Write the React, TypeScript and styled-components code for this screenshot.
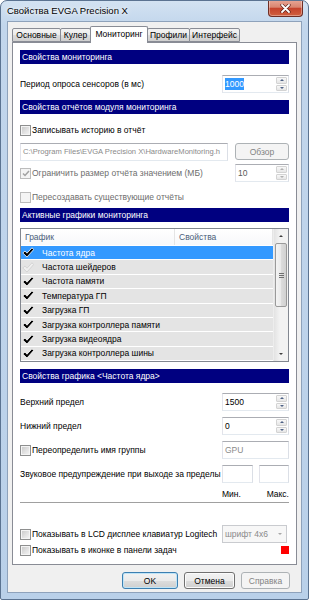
import styled, { createGlobalStyle } from "styled-components";

const GlobalStyle = createGlobalStyle`
  html, body {
    margin: 0;
    padding: 0;
  }
  body {
    font-family: "Liberation Sans", Arial, sans-serif;
    font-size: 8.5px;
    color: #000;
  }
`;

const Window = styled.div`
  width: 309px;
  height: 600px;
  box-sizing: border-box;
  border: 1px solid #5b7391;
  border-radius: 7px 7px 2px 2px;
  background: linear-gradient(180deg, #d3e2f2 0%, #c2d6ec 24px, #b9d0e9 100%);
  display: flex;
  flex-direction: column;
  overflow: hidden;
`;

const TitleBar = styled.div`
  height: 20px;
  display: flex;
  justify-content: space-between;
  align-items: flex-start;
  padding-left: 6px;
`;

const Title = styled.div`
  font-size: 9.5px;
  line-height: 20px;
  color: #000;
  text-shadow: 0 0 6px #fff, 0 0 3px #fff;
`;

const CloseButton = styled.div`
  width: 35px;
  height: 17px;
  margin-right: 5px;
  margin-top: -1px;
  box-sizing: border-box;
  border: 1px solid #6f2e25;
  border-top: none;
  border-radius: 0 0 4px 4px;
  background: linear-gradient(180deg, #e8a797 0%, #d98570 45%, #c5432c 52%, #d0603f 100%);
  box-shadow: inset 0 0 0 1px rgba(255, 255, 255, 0.35);
  display: flex;
  align-items: center;
  justify-content: center;
`;

const Client = styled.div`
  flex: 1;
  margin: 0 6px 6px;
  border: 1px solid #8ea2bb;
  background: #f0f0f0;
  display: flex;
  flex-direction: column;
`;

const TabStrip = styled.div`
  height: 16px;
  margin-top: 4px;
  padding-left: 4px;
  display: flex;
  align-items: flex-end;
`;

const Tab = styled.div<{ $w: number; $active?: boolean }>`
  width: ${(p) => p.$w}px;
  height: ${(p) => (p.$active ? 17 : 14)}px;
  margin-bottom: ${(p) => (p.$active ? -1 : 0)}px;
  margin-right: -1px;
  box-sizing: border-box;
  border: 1px solid #898c95;
  border-bottom: ${(p) => (p.$active ? "none" : "1px solid #898c95")};
  border-radius: 2px 2px 0 0;
  background: ${(p) =>
    p.$active
      ? "#fff"
      : "linear-gradient(180deg, #f3f3f3 0%, #ebebeb 50%, #dddddd 51%, #cfcfcf 100%)"};
  position: relative;
  z-index: ${(p) => (p.$active ? 2 : 1)};
  display: flex;
  align-items: center;
  justify-content: center;
  padding-bottom: ${(p) => (p.$active ? 3 : 0)}px;
  white-space: nowrap;
`;

const Panel = styled.div`
  height: 523px;
  margin: 0 4px;
  box-sizing: border-box;
  border: 1px solid #898c95;
  background: #fff;
  padding: 0 7px;
  display: flex;
  flex-direction: column;
`;

const SectionHeader = styled.div<{ $mt: number }>`
  height: 14px;
  margin-top: ${(p) => p.$mt}px;
  background: #000080;
  color: #fff;
  padding-left: 2px;
  display: flex;
  align-items: center;
  flex: none;
`;

const Row = styled.div<{ $mt: number; $h?: number; $end?: boolean }>`
  height: ${(p) => p.$h ?? 18}px;
  margin-top: ${(p) => p.$mt}px;
  display: flex;
  align-items: center;
  justify-content: ${(p) => (p.$end ? "flex-end" : "space-between")};
  flex: none;
`;

const Label = styled.span<{ $disabled?: boolean }>`
  color: ${(p) => (p.$disabled ? "#6d6d6d" : "#000")};
  white-space: nowrap;
`;

const CheckWrap = styled.label`
  display: flex;
  align-items: center;
  gap: 1px;
`;

const Box = styled.span<{ $disabled?: boolean }>`
  width: 11px;
  height: 11px;
  box-sizing: border-box;
  flex: none;
  border: 1px solid ${(p) => (p.$disabled ? "#bcbcbc" : "#8e8f8f")};
  background: ${(p) =>
    p.$disabled
      ? "#f4f4f4"
      : "linear-gradient(135deg, #c6c6c6 0%, #e2e2e2 55%, #f6f6f6 100%)"};
  box-shadow: inset 0 0 0 1px #f4f4f4;
  display: flex;
  align-items: center;
  justify-content: center;
`;

const TextBox = styled.div<{ $w: number; $disabled?: boolean; $small?: boolean }>`
  width: ${(p) => p.$w}px;
  height: 18px;
  box-sizing: border-box;
  border: 1px solid;
  border-color: #abadb3 #dbdfe6 #e3e9ef #e2e3ea;
  background: #fff;
  color: ${(p) => (p.$disabled ? "#8a8a8a" : "#000")};
  font-size: ${(p) => (p.$small ? "7.6px" : "inherit")};
  padding-left: 2px;
  display: flex;
  align-items: center;
  overflow: hidden;
  white-space: nowrap;
  flex: none;
`;

const SpinBox = styled.div<{ $w: number }>`
  width: ${(p) => p.$w}px;
  height: 18px;
  box-sizing: border-box;
  border: 1px solid;
  border-color: #abadb3 #dbdfe6 #e3e9ef #e2e3ea;
  background: #fff;
  display: flex;
  flex: none;
`;

const SpinValue = styled.div<{ $disabled?: boolean }>`
  flex: 1;
  padding-left: 2px;
  display: flex;
  align-items: center;
  color: ${(p) => (p.$disabled ? "#5a5a5a" : "#000")};
`;

const Selected = styled.span`
  background: #3399ff;
  color: #fff;
  padding: 1px 0;
`;

const SpinButtons = styled.div`
  width: 11px;
  display: flex;
  flex-direction: column;
  gap: 1px;
  padding: 1px 1px 1px 0;
`;

const SpinBtn = styled.div`
  flex: 1;
  box-sizing: border-box;
  border: 1px solid #d3d3d3;
  border-radius: 1px;
  background: linear-gradient(180deg, #f8f8f8, #e6e6e6);
  display: flex;
  align-items: center;
  justify-content: center;
`;

const Arrow = styled.span<{ $down?: boolean; $color?: string }>`
  width: 0;
  height: 0;
  border-left: 2.5px solid transparent;
  border-right: 2.5px solid transparent;
  ${(p) =>
    p.$down
      ? `border-top: 2.5px solid ${p.$color ?? "#4d6185"};`
      : `border-bottom: 2.5px solid ${p.$color ?? "#4d6185"};`}
`;

const Button = styled.div<{ $w: number; $disabled?: boolean; $default?: boolean }>`
  width: ${(p) => p.$w}px;
  height: 17px;
  box-sizing: border-box;
  border: 1px solid
    ${(p) => (p.$disabled ? "#adb2b5" : p.$default ? "#3c7fb1" : "#707070")};
  border-radius: 3px;
  background: ${(p) =>
    p.$disabled
      ? "#f4f4f4"
      : "linear-gradient(180deg, #f2f2f2 0%, #ebebeb 50%, #dddddd 51%, #cfcfcf 100%)"};
  box-shadow: ${(p) =>
    p.$disabled
      ? "none"
      : p.$default
      ? "inset 0 0 0 1px #bfe4f7"
      : "inset 0 0 0 1px #fbfbfb"};
  color: ${(p) => (p.$disabled ? "#838383" : "#000")};
  display: flex;
  align-items: center;
  justify-content: center;
  flex: none;
`;

const ListView = styled.div`
  height: 134px;
  margin-top: 6px;
  box-sizing: border-box;
  border: 1px solid #828790;
  display: flex;
  flex: none;
`;

const ListMain = styled.div`
  flex: 1;
  display: flex;
  flex-direction: column;
  overflow: hidden;
`;

const ListHeader = styled.div`
  height: 16px;
  flex: none;
  display: flex;
  align-items: center;
  background: linear-gradient(180deg, #ffffff, #f7f8fa);
`;

const HeaderCell = styled.div<{ $w?: number }>`
  width: ${(p) => (p.$w ? `${p.$w}px` : "auto")};
  flex: ${(p) => (p.$w ? "none" : 1)};
  height: 100%;
  box-sizing: border-box;
  padding-left: 4px;
  display: flex;
  align-items: center;
  border-right: 1px solid #e5e5e5;
  color: #4c607a;
`;

const ListRow = styled.div<{ $selected?: boolean }>`
  height: 13.4px;
  margin-top: 1px;
  flex: none;
  display: flex;
  align-items: center;
  background: ${(p) => (p.$selected ? "#3399ff" : "#e4e4e4")};
  color: ${(p) => (p.$selected ? "#fff" : "#000")};
  white-space: nowrap;
`;

const IconCell = styled.div`
  width: 20px;
  padding-left: 1px;
  display: flex;
  align-items: center;
  flex: none;
`;

const ScrollBar = styled.div`
  width: 14px;
  flex: none;
  background: linear-gradient(90deg, #e3e3e3, #f2f2f2 40%, #f2f2f2);
  border-left: 1px solid #ededed;
  display: flex;
  flex-direction: column;
`;

const ScrollArrow = styled.div<{ $grow?: boolean }>`
  height: 14px;
  display: flex;
  align-items: center;
  justify-content: center;
  flex: none;
  margin-top: ${(p) => (p.$grow ? "auto" : "0")};
`;

const Thumb = styled.div`
  height: 64px;
  margin: 0 1px;
  box-sizing: border-box;
  border: 1px solid #9a9a9a;
  border-radius: 2px;
  background: linear-gradient(90deg, #f4f4f4 0%, #e9e9e9 50%, #dcdcdc 51%, #d1d1d1 100%);
  display: flex;
  flex-direction: column;
  align-items: center;
  justify-content: center;
  gap: 1px;
`;

const Grip = styled.span`
  width: 5px;
  height: 1px;
  background: #6f6f6f;
`;

const BoxPair = styled.div`
  display: flex;
  gap: 6px;
`;

const MinMax = styled.div`
  width: 67px;
  display: flex;
  justify-content: space-between;
  color: #000;
`;

const Separator = styled.div`
  height: 1px;
  margin-top: 2px;
  background: #a0a0a0;
  flex: none;
`;

const Combo = styled.div`
  width: 65px;
  height: 18px;
  margin-right: 2px;
  box-sizing: border-box;
  border: 1px solid #c9cbcf;
  background: #f7f7f7;
  color: #8a8a8a;
  padding: 0 4px 0 2px;
  display: flex;
  align-items: center;
  justify-content: space-between;
  flex: none;
`;

const ColorSwatch = styled.span`
  width: 8px;
  height: 8px;
  background: #ff0000;
`;

const ButtonRow = styled.div`
  margin-top: 7px;
  padding-right: 11px;
  display: flex;
  justify-content: flex-end;
  gap: 6px;
`;

function BoxCheck({ color }: { color: string }) {
  return (
    <svg width="8" height="7" viewBox="0 0 8 7">
      <path d="M1 3.5 L3 5.5 L7 1" fill="none" stroke={color} strokeWidth="1.5" />
    </svg>
  );
}

function CheckBox({
  label,
  checked,
  disabled,
}: {
  label: string;
  checked?: boolean;
  disabled?: boolean;
}) {
  return (
    <CheckWrap>
      <Box $disabled={disabled}>{checked && <BoxCheck color="#a2a2a2" />}</Box>
      <Label $disabled={disabled}>{label}</Label>
    </CheckWrap>
  );
}

function Spin({
  w,
  value,
  disabled,
}: {
  w: number;
  value: React.ReactNode;
  disabled?: boolean;
}) {
  return (
    <SpinBox $w={w}>
      <SpinValue $disabled={disabled}>{value}</SpinValue>
      <SpinButtons>
        <SpinBtn>
          <Arrow $color={disabled ? "#b0b0b0" : "#4d6185"} />
        </SpinBtn>
        <SpinBtn>
          <Arrow $down $color={disabled ? "#b0b0b0" : "#4d6185"} />
        </SpinBtn>
      </SpinButtons>
    </SpinBox>
  );
}

function ListCheck({ faint }: { faint?: boolean }) {
  return (
    <svg width="12" height="11" viewBox="0 0 12 11">
      <path
        d="M0.8 6 L3 4 L5 6.2 L10 0.8 L11.6 2.6 L5 10 Z"
        fill={faint ? "#efefef" : "#000"}
        stroke={faint ? "#cfcfcf" : "#fff"}
        strokeWidth="0.8"
        strokeLinejoin="round"
      />
    </svg>
  );
}

const graphs = [
  { name: "Частота ядра", selected: true },
  { name: "Частота шейдеров", faint: true },
  { name: "Частота памяти" },
  { name: "Температура ГП" },
  { name: "Загрузка ГП" },
  { name: "Загрузка контроллера памяти" },
  { name: "Загрузка видеоядра" },
  { name: "Загрузка контроллера шины" },
];

const tabs = [
  { name: "Основные", w: 49 },
  { name: "Кулер", w: 31 },
  { name: "Мониторинг", w: 58, active: true },
  { name: "Профили", w: 43 },
  { name: "Интерфейс", w: 51 },
];

export default function App() {
  return (
    <>
      <GlobalStyle />
      <Window>
        <TitleBar>
          <Title>Свойства EVGA Precision X</Title>
          <CloseButton>
            <svg width="11" height="9" viewBox="0 0 11 9">
              <path
                d="M2 1 L9 8 M9 1 L2 8"
                stroke="#5a1f18"
                strokeWidth="3.2"
                strokeLinecap="round"
              />
              <path
                d="M2 1 L9 8 M9 1 L2 8"
                stroke="#fff"
                strokeWidth="1.8"
                strokeLinecap="round"
              />
            </svg>
          </CloseButton>
        </TitleBar>
        <Client>
          <TabStrip>
            {tabs.map((t) => (
              <Tab key={t.name} $w={t.w} $active={t.active}>
                {t.name}
              </Tab>
            ))}
          </TabStrip>
          <Panel>
            <SectionHeader $mt={7}>Свойства мониторинга</SectionHeader>
            <Row $mt={11}>
              <Label>Период опроса сенсоров (в мс)</Label>
              <Spin w={67} value={<Selected>1000</Selected>} />
            </Row>

            <SectionHeader $mt={7}>Свойства отчётов модуля мониторинга</SectionHeader>
            <Row $mt={9} $h={14}>
              <CheckBox label="Записывать историю в отчёт" />
            </Row>
            <Row $mt={6} $h={17}>
              <TextBox $w={208} $disabled $small>
                C:\Program Files\EVGA Precision X\HardwareMonitoring.h
              </TextBox>
              <Button $w={54} $disabled>
                Обзор
              </Button>
            </Row>
            <Row $mt={4}>
              <CheckBox label="Ограничить размер отчёта значением (МБ)" checked disabled />
              <Spin w={54} value="10" disabled />
            </Row>
            <Row $mt={8} $h={14}>
              <CheckBox label="Пересоздавать существующие отчёты" disabled />
            </Row>

            <SectionHeader $mt={4}>Активные графики мониторинга</SectionHeader>
            <ListView>
              <ListMain>
                <ListHeader>
                  <HeaderCell $w={154}>График</HeaderCell>
                  <HeaderCell>Свойства</HeaderCell>
                </ListHeader>
                {graphs.map((g) => (
                  <ListRow key={g.name} $selected={g.selected}>
                    <IconCell>
                      <ListCheck faint={g.faint} />
                    </IconCell>
                    {g.name}
                  </ListRow>
                ))}
              </ListMain>
              <ScrollBar>
                <ScrollArrow>
                  <Arrow $color="#3f3f3f" />
                </ScrollArrow>
                <Thumb>
                  <Grip />
                  <Grip />
                  <Grip />
                </Thumb>
                <ScrollArrow $grow>
                  <Arrow $down $color="#3f3f3f" />
                </ScrollArrow>
              </ScrollBar>
            </ListView>

            <SectionHeader $mt={7}>Свойства графика &lt;Частота ядра&gt;</SectionHeader>
            <Row $mt={10}>
              <Label>Верхний предел</Label>
              <Spin w={67} value="1500" />
            </Row>
            <Row $mt={6}>
              <Label>Нижний предел</Label>
              <Spin w={67} value="0" />
            </Row>
            <Row $mt={6}>
              <CheckBox label="Переопределить имя группы" />
              <TextBox $w={67} $disabled>
                GPU
              </TextBox>
            </Row>
            <Row $mt={6}>
              <Label>Звуковое предупреждение при выходе за пределы</Label>
              <BoxPair>
                <TextBox $w={31} />
                <TextBox $w={30} />
              </BoxPair>
            </Row>
            <Row $mt={5} $h={12} $end>
              <MinMax>
                <span>Мин.</span>
                <span>Макс.</span>
              </MinMax>
            </Row>
            <Separator />

            <Row $mt={22}>
              <CheckBox label="Показывать в LCD дисплее клавиатур Logitech" />
              <Combo>
                шрифт 4x6
                <Arrow $down $color="#a8a8a8" />
              </Combo>
            </Row>
            <Row $mt={1} $h={12}>
              <CheckBox label="Показывать в иконке в панели задач" />
              <ColorSwatch />
            </Row>
          </Panel>
          <ButtonRow>
            <Button $w={56} $default>
              OK
            </Button>
            <Button $w={51}>Отмена</Button>
            <Button $w={49} $disabled>
              Справка
            </Button>
          </ButtonRow>
        </Client>
      </Window>
    </>
  );
}
